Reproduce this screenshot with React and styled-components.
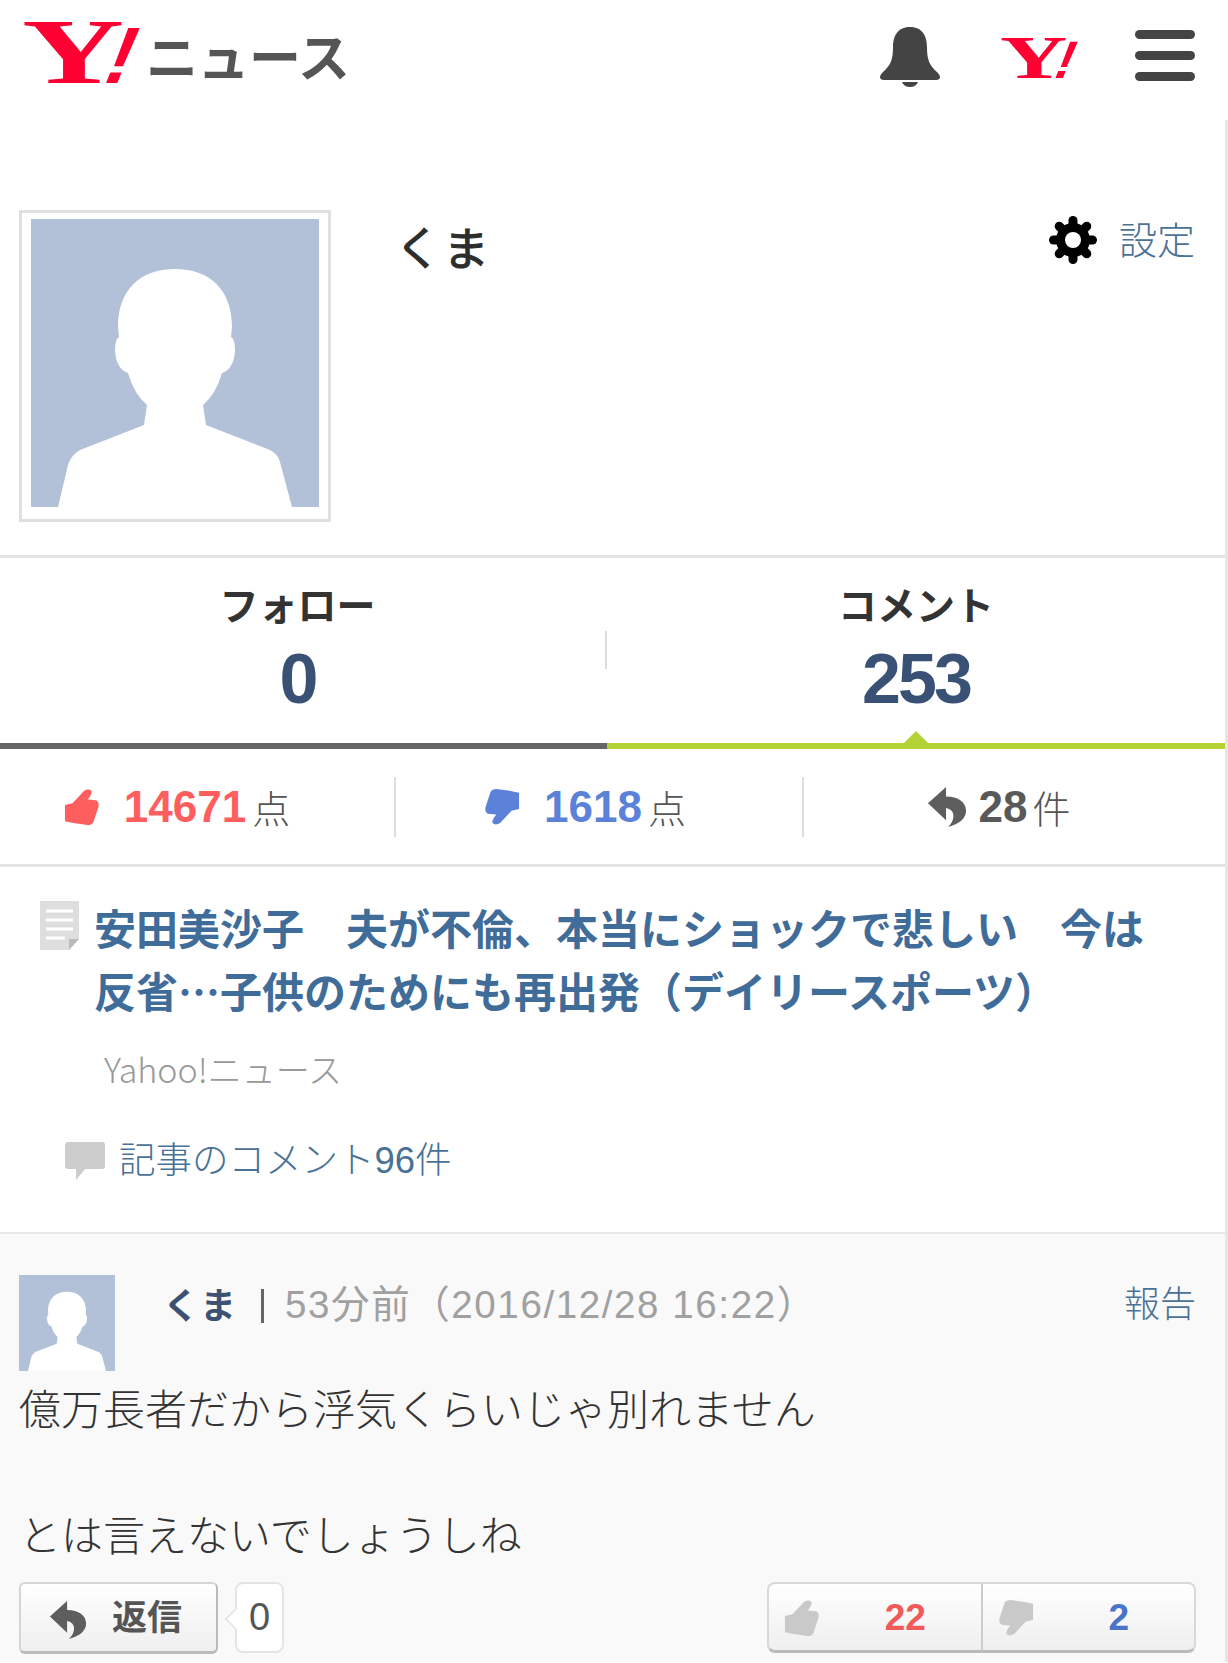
import { createGlobalStyle, styled } from "styled-components";

const SANS = `"Liberation Sans", "Noto Sans CJK JP", sans-serif`;
const CJK = `"Noto Sans CJK JP", "Liberation Sans", sans-serif`;
const LINK = "#4a7196";

const GlobalStyle = createGlobalStyle`
  html, body {
    margin: 0;
    padding: 0;
    background: #fff;
    font-family: ${CJK};
    color: #333;
  }
  * {
    box-sizing: border-box;
  }
`;

const Page = styled.div`
  width: 1228px;
  height: 1663px;
  overflow: hidden;
`;

const Header = styled.header`
  height: 120px;
  display: flex;
  align-items: flex-start;
  padding: 21px 33px 0 22px;
`;

// the red Y! stays real text, just stretched and slanted
const Mark = styled.span`
  display: flex;
  flex: none;
  align-items: baseline;
  width: ${(p) => 124 * p.$scale}px;
  margin: ${(p) => p.$margin};
  color: #ff0033;
  font-weight: 700;
`;

const MarkY = styled.span`
  width: ${(p) => 77 * p.$scale}px;
  font-family: "Liberation Serif", serif;
  font-size: ${(p) => 93 * p.$scale}px;
  transform: scaleX(1.52);
  transform-origin: left center;
`;

const MarkBang = styled.span`
  font-family: "Liberation Sans", sans-serif;
  font-size: ${(p) => 80 * p.$scale}px;
  transform: skewX(-22deg);
  transform-origin: 0 78%;
`;

const LogoText = styled.span`
  font-size: 52px;
  line-height: 60px;
  margin: 4px 0 0 0;
  font-weight: 700;
  color: #555;
  letter-spacing: -0.5px;
`;

const HeaderIcons = styled.div`
  margin-left: auto;
  display: flex;
  align-items: flex-start;
`;

const BellIcon = styled.svg`
  width: 60px;
  height: 60px;
  margin-top: 6px;
`;

const Burger = styled.div`
  width: 60px;
  display: flex;
  flex-direction: column;
  gap: 12px;
  margin-top: 9px;
  span {
    height: 9px;
    border-radius: 5px;
    background: #444;
  }
`;

const Main = styled.main`
  width: 1228px;
  border-right: 3px solid #e6e6e6;
`;

const Profile = styled.section`
  height: 438px;
  padding: 90px 30px 0 19px;
  display: flex;
  align-items: flex-start;
  border-bottom: 3px solid #e3e3e3;
`;

const AvatarFrame = styled.div`
  width: 312px;
  height: 312px;
  border: 3px solid #dfdfdf;
  padding: 6px 9px;
`;

const Silhouette = styled.svg`
  display: block;
  width: ${(p) => p.$size}px;
  height: ${(p) => p.$size}px;
  background: #b2c0d8;
  flex: none;
`;

const ProfileName = styled.h1`
  margin: 5px 0 0 64px;
  font-size: 46px;
  line-height: 60px;
  font-weight: 400;
  -webkit-text-stroke: 1px #2d2d2d;
  color: #2d2d2d;
  letter-spacing: 2px;
`;

const Settings = styled.a`
  margin-left: auto;
  height: 60px;
  display: flex;
  align-items: center;
  gap: 22px;
  font-size: 38px;
  line-height: 60px;
  color: ${LINK};
  font-weight: 300;
  svg {
    width: 48px;
    height: 48px;
  }
  span {
    margin-top: -4px;
  }
`;

const Tabs = styled.nav`
  display: flex;
  height: 191px;
`;

const Tab = styled.div`
  position: relative;
  width: ${(p) => p.$width}px;
  padding: 17px ${(p) => p.$shift}px 0 0;
  text-align: center;
  border-bottom: 6px solid ${(p) => (p.$active ? "#b2d235" : "#666")};
  ${(p) =>
    p.$divided &&
    `&::after {
      content: "";
      position: absolute;
      right: 0;
      top: 73px;
      width: 2px;
      height: 38px;
      background: #ddd;
    }`}
  ${(p) =>
    p.$active &&
    `&::before {
      content: "";
      position: absolute;
      left: 50%;
      bottom: 0;
      margin-left: -12px;
      border-left: 12px solid transparent;
      border-right: 12px solid transparent;
      border-bottom: 12px solid #b2d235;
    }`}
`;

const TabLabel = styled.div`
  font-size: 39px;
  line-height: 56px;
  font-weight: 700;
  color: #333;
`;

const TabCount = styled.div`
  margin-top: 8px;
  font-family: ${SANS};
  font-size: 70px;
  line-height: 80px;
  font-weight: 700;
  color: #3a5176;
  letter-spacing: -3px;
`;

const Summary = styled.div`
  display: flex;
  height: 118px;
  align-items: center;
  border-bottom: 3px solid #e3e3e3;
`;

const SummaryCell = styled.div`
  width: ${(p) => p.$width}px;
  height: 60px;
  display: flex;
  align-items: center;
  justify-content: center;
  gap: ${(p) => p.$gap}px;
  padding-right: ${(p) => p.$shift}px;
  border-right: ${(p) => (p.$last ? "none" : "2px solid #ddd")};
`;

const SummaryValue = styled.span`
  font-family: ${SANS};
  font-size: 44px;
  font-weight: 700;
  color: ${(p) => p.$color};
`;

const SummaryUnit = styled.span`
  font-size: 38px;
  font-weight: 300;
  color: #555;
  margin-left: -${(p) => p.$pull}px;
`;

const HandIcon = styled.svg`
  width: ${(p) => p.$size}px;
  height: ${(p) => p.$size}px;
  flex: none;
  fill: ${(p) => p.$color};
  transform: ${(p) => (p.$down ? "rotate(180deg)" : "none")};
`;

const ReplyGlyph = styled.svg`
  width: ${(p) => p.$size}px;
  height: ${(p) => p.$size}px;
  flex: none;
  fill: #5e5e5e;
`;

const Article = styled.section`
  height: 365px;
  padding: 28px 40px 0 40px;
`;

const TitleRow = styled.div`
  display: flex;
  gap: 15px;
`;

const DocIcon = styled.svg`
  width: 39px;
  height: 49px;
  flex: none;
  margin-top: 6px;
`;

const ArticleTitle = styled.a`
  font-size: 42px;
  line-height: 63px;
  font-weight: 700;
  color: #3f6c98;
  width: 1072px;
`;

const Source = styled.div`
  margin: 23px 0 0 64px;
  font-size: 34px;
  line-height: 50px;
  font-weight: 300;
  color: #999;
`;

const CommentLink = styled.a`
  display: flex;
  align-items: center;
  gap: 14px;
  margin: 42px 0 0 25px;
  font-family: ${SANS};
  font-size: 36.5px;
  line-height: 50px;
  font-weight: 300;
  color: ${LINK};
  svg {
    width: 40px;
    height: 38px;
  }
`;

const Comment = styled.section`
  height: 430px;
  background: #f9f9f9;
  border-top: 2px solid #e8e8e8;
  padding: 41px 29px 0 19px;
`;

const CommentHead = styled.div`
  display: flex;
  align-items: flex-start;
`;

const CommentMeta = styled.div`
  display: flex;
  align-items: center;
  flex: 1;
  height: 52px;
  margin-left: 48px;
`;

const CommentAuthor = styled.span`
  margin-top: 4px;
  font-size: 36px;
  font-weight: 700;
  color: #3d5273;
  letter-spacing: 1px;
`;

const Sep = styled.span`
  width: 3px;
  height: 34px;
  margin: 10px 21px 0 24px;
  background: #666;
`;

const CommentTime = styled.span`
  font-family: ${SANS};
  font-size: 38.5px;
  letter-spacing: 1.6px;
  color: #a0a0a0;
`;

const Report = styled.a`
  margin-left: auto;
  font-size: 36px;
  font-weight: 300;
  color: ${LINK};
`;

const CommentBody = styled.p`
  margin: 4px 0 0 0;
  font-size: 42px;
  line-height: 63px;
  color: #333;
  font-weight: 300;
`;

const Actions = styled.div`
  display: flex;
  align-items: flex-start;
  margin-top: 18px;
`;

const ReplyButton = styled.button`
  width: 199px;
  height: 72px;
  display: flex;
  align-items: center;
  gap: 25px;
  padding: 4px 0 0 28px;
  border: 2px solid #d5d5d5;
  border-bottom: 3px solid #bbb;
  border-right-color: #bbb;
  border-radius: 6px;
  background: linear-gradient(#fff, #efefef);
  font-family: ${CJK};
  font-size: 35px;
  font-weight: 700;
  color: #555;
  span {
    margin-top: -10px;
  }
`;

const ReplyCount = styled.div`
  position: relative;
  width: 49px;
  height: 71px;
  margin-left: 17px;
  border: 2px solid #e4e4e4;
  border-radius: 8px;
  background: #fff;
  font-family: ${SANS};
  font-size: 38px;
  line-height: 67px;
  text-align: center;
  color: #555;
  &::before {
    content: "";
    position: absolute;
    left: -11px;
    top: 25px;
    width: 18px;
    height: 18px;
    background: #fff;
    border-left: 2px solid #e4e4e4;
    border-bottom: 2px solid #e4e4e4;
    transform: rotate(45deg) scale(0.8);
  }
`;

const VoteGroup = styled.div`
  display: flex;
  width: 429px;
  height: 71px;
  margin-left: auto;
  border: 2px solid #d8d8d8;
  border-bottom: 3px solid #bbb;
  border-radius: 8px;
  background: linear-gradient(#fff, #efefef);
`;

const Vote = styled.div`
  flex: 1;
  display: flex;
  align-items: center;
  padding: 2px 0 0 15px;
  border-left: ${(p) => (p.$split ? "2px solid #ccc" : "none")};
`;

const VoteCount = styled.span`
  flex: 1;
  text-align: center;
  padding-left: 10px;
  font-family: ${SANS};
  font-size: 37px;
  font-weight: 700;
  color: ${(p) => p.$color};
`;

const PERSON =
  "M27 288 L37 246 Q40 236 49 231 L113 206 L116 186 Q103 175 97 154 Q85 150 84 131 Q84 120 88 118 L87 108 C87 70 110 50 144 50 C178 50 201 70 201 108 L200 118 Q204 120 204 131 Q203 150 191 154 Q185 175 172 186 L175 206 L239 231 Q247 235 249 243 L261 288 Z";

const Person = ({ size }) => (
  <Silhouette $size={size} viewBox="0 0 288 288">
    <path d={PERSON} fill="#fff" />
  </Silhouette>
);

const YahooMark = ({ scale, margin }) => (
  <Mark $scale={scale} $margin={margin}>
    <MarkY $scale={scale}>Y</MarkY>
    <MarkBang $scale={scale}>!</MarkBang>
  </Mark>
);

const Thumb = ({ size, color, down }) => (
  <HandIcon $size={size} $color={color} $down={down} viewBox="0 0 36 38">
    <path d="M0 17 L8 15 L20 2 Q25 -1 28 2 Q29 5 24 11 L33 12 Q37 14 35 20 L30 35 Q28 38 24 38 L9 36 L0 34 Z" />
  </HandIcon>
);

const Reply = ({ size }) => (
  <ReplyGlyph $size={size} viewBox="0 0 40 42">
    <path d="M0 17 L19 0 V10 C32 10 40 16 40 25 C40 33 33 39 21 42 C28 36 30 24 19 22 V35 Z" />
  </ReplyGlyph>
);

const Gear = () => (
  <svg viewBox="0 0 48 48">
    <circle cx="24" cy="24" r="17" fill="#000" />
    {[0, 45, 90, 135, 180, 225, 270, 315].map((deg) => (
      <rect
        key={deg}
        x="19.5"
        y="0"
        width="9"
        height="14"
        rx="4.5"
        fill="#000"
        transform={`rotate(${deg} 24 24)`}
      />
    ))}
    <circle cx="24" cy="24" r="8" fill="#fff" />
  </svg>
);

const App = () => {
  return (
    <Page>
      <GlobalStyle />
      <Header>
        <YahooMark scale={1} margin="-23px 0 0 0" />
        <LogoText>ニュース</LogoText>
        <HeaderIcons>
          <BellIcon viewBox="0 0 60 60">
            <path
              d="M30 0 C43 0 47 10 47 20 C47 32 49 38 57 45 Q60 48 60 50 Q60 53 56 53 L4 53 Q0 53 0 50 Q0 48 3 45 C11 38 13 32 13 20 C13 10 17 0 30 0 Z"
              fill="#444"
            />
            <path d="M22 55 L38 55 Q36 60 30 60 Q24 60 22 55 Z" fill="#444" />
          </BellIcon>
          <YahooMark scale={0.66} margin="1px 53px 0 60px" />
          <Burger>
            <span />
            <span />
            <span />
          </Burger>
        </HeaderIcons>
      </Header>
      <Main>
        <Profile>
          <AvatarFrame>
            <Person size={288} />
          </AvatarFrame>
          <ProfileName>くま</ProfileName>
          <Settings>
            <Gear />
            <span>設定</span>
          </Settings>
        </Profile>
        <Tabs>
          <Tab $width={607} $shift={12} $divided>
            <TabLabel>フォロー</TabLabel>
            <TabCount>0</TabCount>
          </Tab>
          <Tab $width={618} $shift={0} $active>
            <TabLabel>コメント</TabLabel>
            <TabCount>253</TabCount>
          </Tab>
        </Tabs>
        <Summary>
          <SummaryCell $width={396} $gap={24} $shift={40}>
            <Thumb size={36} color="#ff5e5e" />
            <SummaryValue $color="#ff5e5e">14671</SummaryValue>
            <SummaryUnit $pull={18}>点</SummaryUnit>
          </SummaryCell>
          <SummaryCell $width={408} $gap={24} $shift={28}>
            <Thumb size={36} color="#5b82d8" down />
            <SummaryValue $color="#5b82d8">1618</SummaryValue>
            <SummaryUnit $pull={18}>点</SummaryUnit>
          </SummaryCell>
          <SummaryCell $width={421} $gap={12} $shift={32} $last>
            <Reply size={40} />
            <SummaryValue $color="#595959">28</SummaryValue>
            <SummaryUnit $pull={7}>件</SummaryUnit>
          </SummaryCell>
        </Summary>
        <Article>
          <TitleRow>
            <DocIcon viewBox="0 0 39 49">
              <path d="M0 0 H39 V38 L29 49 H0 Z" fill="#dedede" />
              <path d="M29 49 V38 H39 Z" fill="#bbb" />
              <path d="M6 10 H33 M6 19 H33 M6 28 H33 M6 37 H25" stroke="#fff" strokeWidth="3" />
            </DocIcon>
            <ArticleTitle>
              安田美沙子　夫が不倫、本当にショックで悲しい　今は反省…子供のためにも再出発（デイリースポーツ）
            </ArticleTitle>
          </TitleRow>
          <Source>Yahoo!ニュース</Source>
          <CommentLink>
            <svg viewBox="0 0 40 38">
              <path
                d="M3 0 H37 Q40 0 40 3 V24 Q40 27 37 27 H20 L11 38 V27 H3 Q0 27 0 24 V3 Q0 0 3 0 Z"
                fill="#cdcdcd"
              />
            </svg>
            記事のコメント96件
          </CommentLink>
        </Article>
        <Comment>
          <CommentHead>
            <Person size={96} />
            <CommentMeta>
              <CommentAuthor>くま</CommentAuthor>
              <Sep />
              <CommentTime>53分前（2016/12/28 16:22）</CommentTime>
              <Report>報告</Report>
            </CommentMeta>
          </CommentHead>
          <CommentBody>
            億万長者だから浮気くらいじゃ別れません
            <br />
            <br />
            とは言えないでしょうしね
          </CommentBody>
          <Actions>
            <ReplyButton>
              <Reply size={38} />
              <span>返信</span>
            </ReplyButton>
            <ReplyCount>0</ReplyCount>
            <VoteGroup>
              <Vote>
                <Thumb size={36} color="#c9c9c9" />
                <VoteCount $color="#f05a5a">22</VoteCount>
              </Vote>
              <Vote $split>
                <Thumb size={36} color="#c9c9c9" down />
                <VoteCount $color="#4a74c8">2</VoteCount>
              </Vote>
            </VoteGroup>
          </Actions>
        </Comment>
      </Main>
    </Page>
  );
};

export default App;
